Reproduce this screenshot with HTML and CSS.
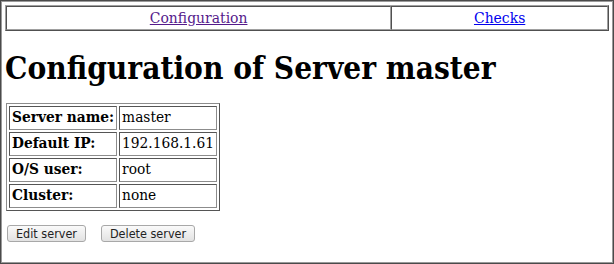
FILE: index.html
```html
<!DOCTYPE html>
<html lang="en">
<head>
    <meta charset="UTF-8">
    <title>Configuration of Server master</title>
    <link rel="stylesheet" href="styles.css">
</head>
<body>
    <div class="frame">
        <table class="nav">
            <tr>
                <td class="nav-main"><a href="#config" class="visited">Configuration</a></td>
                <td><a href="#checks">Checks</a></td>
            </tr>
        </table>
        <h1>Configuration of Server master</h1>
        <table class="info">
            <tr><th>Server name:</th><td>master</td></tr>
            <tr><th>Default IP:</th><td>192.168.1.61</td></tr>
            <tr><th>O/S user:</th><td>root</td></tr>
            <tr><th>Cluster:</th><td>none</td></tr>
        </table>
        <div class="actions">
            <button>Edit server</button>
            <button>Delete server</button>
        </div>
    </div>
</body>
</html>
```

FILE: styles.css
```css
html, body {
    margin: 0;
    height: 100%;
}
body {
    font-family: "DejaVu Serif Condensed", "DejaVu Serif", serif;
    font-stretch: semi-condensed;
    background: white;
    color: black;
}
.frame {
    box-sizing: border-box;
    height: 264px;
    border: 1px solid #4a4a4a;
    box-shadow: inset 1px 1px 0 #9a9a9a, inset -1px -1px 0 #9a9a9a;
    padding: 4px 4px 0 4px;
}
.nav {
    width: 100%;
    border-collapse: separate;
    border-spacing: 0;
    border: 1px solid;
    border-color: #a0a0a0 #505050 #505050 #a0a0a0;
    font-size: 15.5px;
}
.nav td {
    text-align: center;
    padding: 2px;
    border: 1px solid;
    border-color: #505050 #a0a0a0 #a0a0a0 #505050;
}
.nav-main {
    width: 64%;
}
a {
    color: #0000ee;
}
a.visited {
    color: #551a8b;
}
h1 {
    font-size: 31.3px;
    margin: 19px 0 17px 0;
}
.info {
    border: 1px solid;
    border-color: #8c8c8c #555 #555 #8c8c8c;
    border-spacing: 2px;
    margin-left: 1px;
    font-size: 15.3px;
}
.info th, .info td {
    border: 1px solid;
    border-color: #555 #8c8c8c #8c8c8c #555;
    padding: 1px 2px 3px 2px;
    text-align: left;
}
.actions {
    margin-top: 14px;
    margin-left: 2px;
    display: flex;
    gap: 15px;
}
.actions button {
    font-family: "DejaVu Sans Condensed", "DejaVu Sans", sans-serif;
    font-stretch: semi-condensed;
    font-size: 12.5px;
    padding: 0 8px;
    border: 1px solid #a8a8a8;
    border-radius: 3px;
    background: linear-gradient(#fafafa, #e2e2e2);
    color: #222;
}
```
